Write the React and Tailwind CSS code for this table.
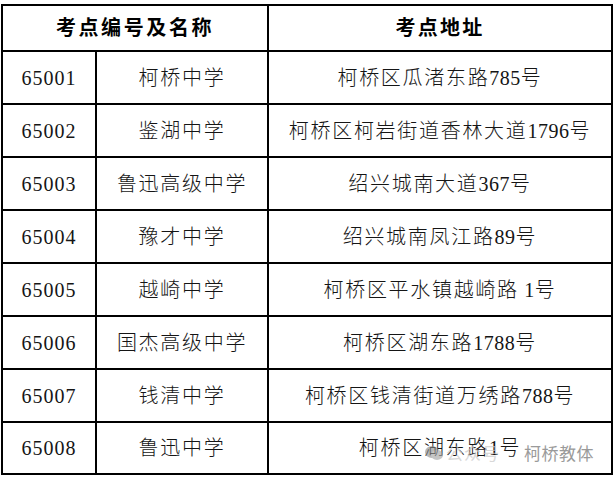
import React from "react";

const rows = [
  ["65001", "柯桥中学", "柯桥区瓜渚东路785号"],
  ["65002", "鉴湖中学", "柯桥区柯岩街道香林大道1796号"],
  ["65003", "鲁迅高级中学", "绍兴城南大道367号"],
  ["65004", "豫才中学", "绍兴城南凤江路89号"],
  ["65005", "越崎中学", "柯桥区平水镇越崎路 1号"],
  ["65006", "国杰高级中学", "柯桥区湖东路1788号"],
  ["65007", "钱清中学", "柯桥区钱清街道万绣路788号"],
  ["65008", "鲁迅中学", "柯桥区湖东路1号"],
];

function Txt({ s }) {
  const parts = s.match(/[0-9 ]+|[^0-9 ]+/g) || [];
  return (
    <span className="whitespace-pre">
      {parts.map((p, i) =>
        /[0-9 ]/.test(p[0]) ? (
          <span key={i} className="tracking-[0.5px]">{p}</span>
        ) : (
          <span key={i} className="tracking-[1.7px]">{p}</span>
        )
      )}
    </span>
  );
}

const cell =
  "border-r-2 border-b-2 border-black flex items-center justify-center text-[20px] text-[#151515] font-light";

export default function App() {
  return (
    <div
      className="w-[615px] h-[477px] bg-white overflow-hidden relative"
      style={{ fontFamily: "'Liberation Serif','Noto Sans CJK SC',serif" }}
    >
      <div className="ml-[1px] mt-[4px] w-[612px] border-l-2 border-t-2 border-black grid grid-cols-[94px_172px_344px] grid-rows-[46px_repeat(7,53px)_52px]">
        <div className="col-span-2 border-r-2 border-b-2 border-black flex items-center justify-center text-[20px] font-bold text-black tracking-[2.6px]">
          考点编号及名称
        </div>
        <div className="border-r-2 border-b-2 border-black flex items-center justify-center text-[20px] font-bold text-black tracking-[2.2px]">
          考点地址
        </div>
        {rows.map((r) => (
          <React.Fragment key={r[0]}>
            <div className={cell}>
              <span className="tracking-[1px]">{r[0]}</span>
            </div>
            <div className={cell}>
              <Txt s={r[1]} />
            </div>
            <div className={cell}>
              <Txt s={r[2]} />
            </div>
          </React.Fragment>
        ))}
      </div>
      <div
        className="absolute left-[424px] top-[440px] flex items-center"
        style={{ fontFamily: "'Noto Sans CJK SC','Noto Sans',sans-serif" }}
      >
        <svg width="20" height="16" viewBox="0 0 20 16" className="opacity-60">
          <ellipse cx="8" cy="7" rx="7" ry="6" fill="#8a8a8a" />
          <ellipse cx="13" cy="10" rx="6" ry="5" fill="#a0a0a0" />
        </svg>
        <span className="ml-[2px] text-[17px] text-[#c8c8c8] opacity-70 tracking-[1px]">公众号</span>
        <span className="ml-[24px] text-[17px] text-[#9a9a9a] tracking-[0.5px]">柯桥教体</span>
      </div>
    </div>
  );
}
